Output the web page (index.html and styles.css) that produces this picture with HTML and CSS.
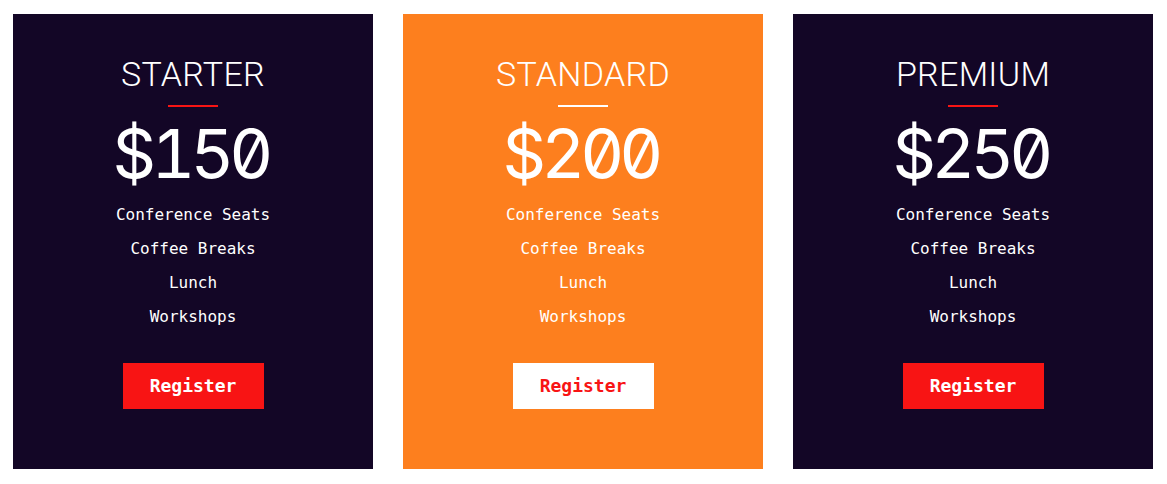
FILE: index.html
```html
<!DOCTYPE html>
<html lang="en">
<head>
<meta charset="utf-8">
<title>Pricing</title>
<link rel="stylesheet" href="styles.css">
</head>
<body>
<main class="pricing">
  <section class="card card-dark">
    <h2 class="plan">STARTER</h2>
    <div class="rule"></div>
    <p class="price">$150</p>
    <ul class="features">
      <li>Conference Seats</li>
      <li>Coffee Breaks</li>
      <li>Lunch</li>
      <li>Workshops</li>
    </ul>
    <a class="btn" href="#">Register</a>
  </section>
  <section class="card card-orange">
    <h2 class="plan">STANDARD</h2>
    <div class="rule"></div>
    <p class="price">$200</p>
    <ul class="features">
      <li>Conference Seats</li>
      <li>Coffee Breaks</li>
      <li>Lunch</li>
      <li>Workshops</li>
    </ul>
    <a class="btn" href="#">Register</a>
  </section>
  <section class="card card-dark">
    <h2 class="plan">PREMIUM</h2>
    <div class="rule"></div>
    <p class="price">$250</p>
    <ul class="features">
      <li>Conference Seats</li>
      <li>Coffee Breaks</li>
      <li>Lunch</li>
      <li>Workshops</li>
    </ul>
    <a class="btn" href="#">Register</a>
  </section>
</main>
</body>
</html>
```
FILE: styles.css
```css
* { box-sizing: border-box; }
html, body { margin: 0; padding: 0; background: #ffffff; }
body { font-family: "DejaVu Sans Mono", monospace; }

.pricing {
  display: flex;
  justify-content: center;
  gap: 30px;
  padding-top: 14px;
  padding-right: 1px;
}

.card {
  width: 360px;
  display: flex;
  flex-direction: column;
  align-items: center;
  padding: 40px 0 60px;
  color: #ffffff;
}
.card-dark { background: #130626; }
.card-orange { background: #fd7f1e; }

.plan {
  margin: 0;
  font-family: Roboto, sans-serif;
  font-weight: 300;
  font-size: 34px;
  line-height: 40px;
  letter-spacing: 0.3px;
}

.rule {
  width: 50px;
  height: 2px;
  margin-top: 11px;
  background: #f81414;
}
.card-orange .rule { background: #ffffff; }

.price {
  margin: 11px 5px 0 0;
  font-family: Inter, sans-serif;
  font-feature-settings: "zero" 1, "tnum" 1;
  font-weight: 400;
  font-size: 68px;
  line-height: 70px;
  letter-spacing: -5px;
}

.features {
  list-style: none;
  margin: 10px 0 0;
  padding: 0;
  text-align: center;
  font-size: 16px;
  line-height: 34px;
}

.btn {
  margin-top: 29px;
  display: block;
  width: 141px;
  height: 46px;
  line-height: 46px;
  text-align: center;
  background: #f81414;
  color: #ffffff;
  font-weight: 700;
  font-size: 18px;
  text-decoration: none;
}
.card-orange .btn { background: #ffffff; color: #f81414; }
```
